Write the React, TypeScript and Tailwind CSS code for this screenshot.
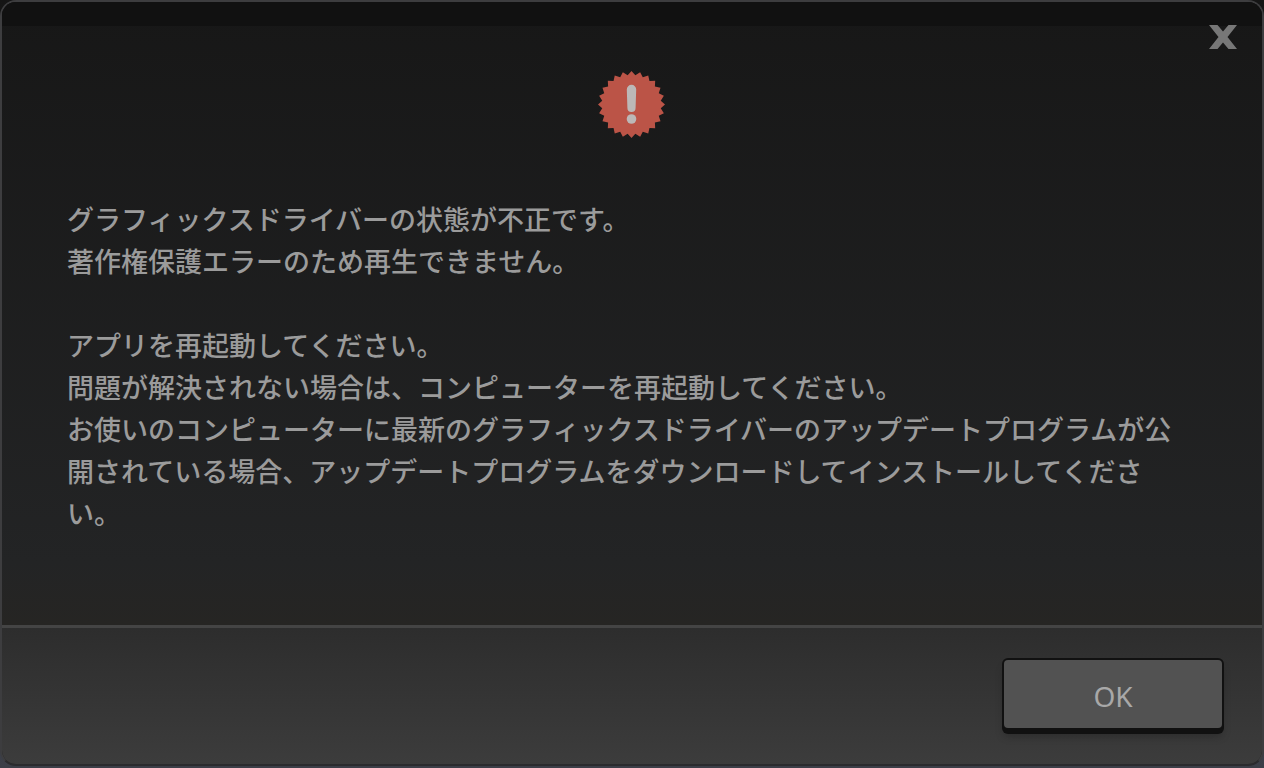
interface MessageDialogProps {
  paragraphs: string[][];
  onClose: () => void;
}

// Points of the serrated badge, alternating between the outer and inner radius
const TEETH = 24;
const badgePoints = Array.from({ length: TEETH * 2 }, (_, i) => {
  const angle = (Math.PI * i) / TEETH - Math.PI / 2;
  const radius = i % 2 === 0 ? 33.5 : 29.5;
  return `${(34.5 + radius * Math.cos(angle)).toFixed(2)},${(34.5 + radius * Math.sin(angle)).toFixed(2)}`;
}).join(' ');

const AlertIcon: React.FC = () => (
  <svg width="70" height="70" viewBox="0 0 70 70" aria-hidden="true">
    <polygon points={badgePoints} fill="#bb5447" />
    <path d="M29.8 19.5a4.7 4.7 0 0 1 9.4 0L38.6 38a4.1 4.1 0 0 1-8.2 0Z" fill="#bcb8b7" />
    <circle cx="34.5" cy="49" r="4.8" fill="#bcb8b7" />
  </svg>
);

const CloseIcon: React.FC = () => (
  <svg width="30" height="26" viewBox="0 0 30 26" aria-hidden="true">
    <path d="M1 1H9.5L15 7.5L20.5 1H29L19.5 13L29 25H20.5L15 18.5L9.5 25H1L10.5 13Z" fill="#777777" />
  </svg>
);

const MessageDialog: React.FC<MessageDialogProps> = ({ paragraphs, onClose }) => (
  <div
    role="alertdialog"
    aria-describedby="message"
    className="flex grow flex-col overflow-hidden rounded-2xl border-2 border-[#3d3d3f] border-b-[#2b2b2e] bg-[#1d1d1d]"
  >
    <div className="relative flex grow flex-col bg-linear-to-b from-[#171717] via-[#232425] via-90% to-[#262523]">
      <div className="h-6 bg-[#111111]" />
      <button type="button" aria-label="閉じる" onClick={onClose} className="absolute top-[22px] right-6">
        <CloseIcon />
      </button>
      <div className="mt-11 flex justify-center">
        <AlertIcon />
      </div>
      <div
        id="message"
        className="mt-[58px] flex flex-col gap-[42px] pr-20 pl-[65px] text-[27px] leading-[42px] font-medium text-[#9b9b9b]"
      >
        {paragraphs.map((lines) => (
          <div key={lines[0]}>
            {lines.map((line) => (
              <p key={line}>{line}</p>
            ))}
          </div>
        ))}
      </div>
    </div>

    <div className="flex justify-end border-t-[3px] border-[#444444] bg-linear-to-b from-[#2d2d2d] to-[#3c3c3c] px-10 pt-8 pb-9">
      <button
        type="button"
        onClick={onClose}
        className="h-[68px] w-[218px] rounded-sm bg-[#525252] pt-1 font-['Noto_Sans',sans-serif] text-[28px] text-[#a8a8a8] shadow-[0_0_0_2px_#111111,0_4px_0_2px_#111111,0_8px_8px_#00000040]"
      >
        OK
      </button>
    </div>
  </div>
);

export default function App() {
  return (
    <main
      lang="ja"
      className="flex min-h-screen flex-col bg-linear-to-b from-[#151515] to-[#3c3f48] pb-0.5 font-['Noto_Sans_CJK_JP',sans-serif]"
    >
      <MessageDialog
        onClose={() => {}}
        paragraphs={[
          ['グラフィックスドライバーの状態が不正です。', '著作権保護エラーのため再生できません。'],
          [
            'アプリを再起動してください。',
            '問題が解決されない場合は、コンピューターを再起動してください。',
            'お使いのコンピューターに最新のグラフィックスドライバーのアップデートプログラムが公開されている場合、アップデートプログラムをダウンロードしてインストールしてください。',
          ],
        ]}
      />
    </main>
  );
}
